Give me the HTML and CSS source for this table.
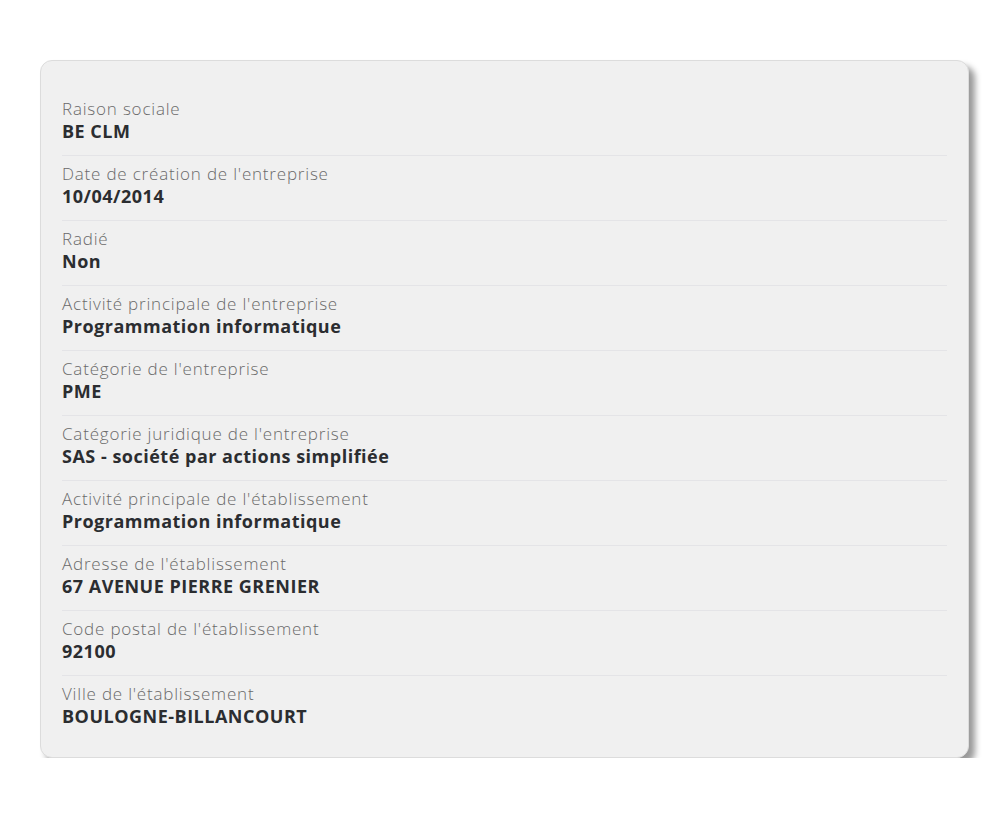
FILE: index.html
```html
<!DOCTYPE html>
<html lang="fr">
<head>
<meta charset="utf-8">
<link rel="stylesheet" href="styles.css">
</head>
<body>
<div class="page">
  <div class="card">
    <div class="row"><div class="label">Raison sociale</div><div class="value">BE CLM</div></div>
    <div class="row"><div class="label">Date de création de l'entreprise</div><div class="value">10/04/2014</div></div>
    <div class="row"><div class="label">Radié</div><div class="value">Non</div></div>
    <div class="row"><div class="label">Activité principale de l'entreprise</div><div class="value">Programmation informatique</div></div>
    <div class="row"><div class="label">Catégorie de l'entreprise</div><div class="value">PME</div></div>
    <div class="row"><div class="label">Catégorie juridique de l'entreprise</div><div class="value">SAS - société par actions simplifiée</div></div>
    <div class="row"><div class="label">Activité principale de l'établissement</div><div class="value">Programmation informatique</div></div>
    <div class="row"><div class="label">Adresse de l'établissement</div><div class="value">67 AVENUE PIERRE GRENIER</div></div>
    <div class="row"><div class="label">Code postal de l'établissement</div><div class="value">92100</div></div>
    <div class="row"><div class="label">Ville de l'établissement</div><div class="value">BOULOGNE-BILLANCOURT</div></div>
  </div>
</div>
</body>
</html>
```
FILE: styles.css
```css
html, body {
  margin: 0;
  padding: 0;
  background: #ffffff;
}
.page {
  padding: 60px 31px 0 40px;
}
.card {
  width: 929px;
  box-sizing: border-box;
  height: 698px;
  background: #f0f0f0;
  border: 1px solid #dcdcdc;
  border-radius: 12px;
  box-shadow: 6px 6px 6px rgba(0, 0, 0, 0.4);
  padding: 29px 21px 0 21px;
  font-family: "Open Sans", "Liberation Sans", sans-serif;
}
.row {
  padding: 7px 0 13px;
  border-top: 1px solid #e4e4e7;
}
.row:first-child {
  border-top: none;
  padding-top: 8px;
}
.label {
  font-size: 17px;
  line-height: 22px;
  font-weight: 300;
  color: #6a6a6a;
  letter-spacing: 0.8px;
}
.value {
  font-size: 18px;
  line-height: 22px;
  font-weight: 700;
  color: #2b2d30;
  letter-spacing: 0.5px;
}
```
